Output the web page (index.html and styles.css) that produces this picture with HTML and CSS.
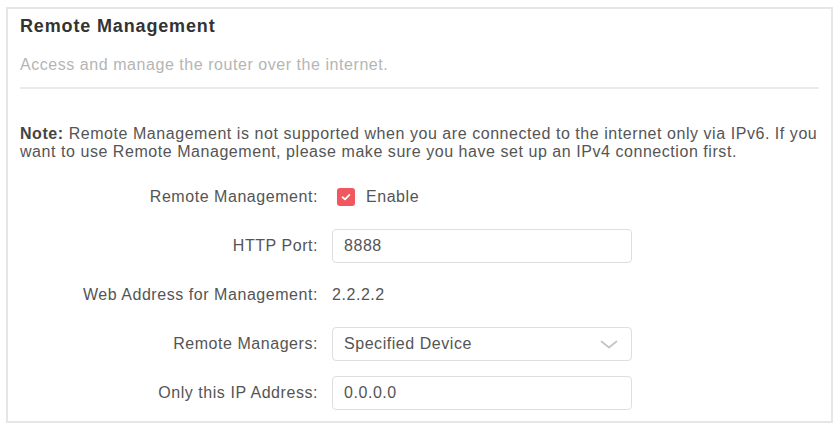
FILE: index.html
```html
<!DOCTYPE html>
<html lang="en">
<head>
    <meta charset="UTF-8">
    <meta name="viewport" content="width=device-width, initial-scale=1.0">
    <title>Remote Management</title>
    <link rel="stylesheet" href="styles.css">
</head>
<body>
    <div class="panel">
        <h2>Remote Management</h2>
        <p class="desc">Access and manage the router over the internet.</p>
        <p class="note"><b>Note:</b> Remote Management is not supported when you are connected to the internet only via IPv6. If you want to use Remote Management, please make sure you have set up an IPv4 connection first.</p>

        <div class="form">
            <div class="row">
                <label>Remote Management:</label>
                <div class="field">
                    <span class="check">
                        <svg width="12" height="12" viewBox="0 0 12 12"><path d="M2.6 6.3 L5 8.4 L9.4 3.9" fill="none" stroke="#fff" stroke-width="1.8" stroke-linecap="round" stroke-linejoin="round"/></svg>
                    </span>
                    <span class="check-label">Enable</span>
                </div>
            </div>
            <div class="row">
                <label>HTTP Port:</label>
                <div class="field"><div class="box">8888</div></div>
            </div>
            <div class="row">
                <label>Web Address for Management:</label>
                <div class="field">2.2.2.2</div>
            </div>
            <div class="row">
                <label>Remote Managers:</label>
                <div class="field">
                    <div class="box select">
                        <span>Specified Device</span>
                        <svg width="18" height="9" viewBox="0 0 18 9"><path d="M1.5 1.5 L9 7.5 L16.5 1.5" fill="none" stroke="#c4c4c4" stroke-width="1.7" stroke-linecap="round" stroke-linejoin="round"/></svg>
                    </div>
                </div>
            </div>
            <div class="row">
                <label>Only this IP Address:</label>
                <div class="field"><div class="box">0.0.0.0</div></div>
            </div>
        </div>
    </div>
</body>
</html>
```

FILE: styles.css
```css
body {
    margin: 0;
    padding: 7px 5px 4px 6px;
    background: #fff;
    font-family: "Liberation Sans", Arial, sans-serif;
    color: #555;
    letter-spacing: 0.55px;
}
.panel {
    border: 2px solid #e6e6e6;
    padding: 0 12px;
    height: 416px;
    box-sizing: border-box;
}
h2 {
    margin: 0;
    padding-top: 5px;
    font-size: 18px;
    line-height: 24px;
    letter-spacing: 0.85px;
    color: #333;
}
.desc {
    margin: 0;
    padding: 17px 0 12px;
    font-size: 16px;
    line-height: 20px;
    color: #b5b5b5;
    border-bottom: 2px solid #eaeaea;
}
.note {
    margin: 36px 0 0;
    font-size: 16px;
    line-height: 18px;
    color: #555;
}
.note b {
    color: #444;
}
.form {
    margin-top: 19px;
    display: flex;
    flex-direction: column;
    gap: 15px;
}
.row {
    display: flex;
    align-items: center;
    height: 34px;
    font-size: 16px;
}
.row label {
    width: 312px;
    flex: none;
    text-align: right;
    padding-right: 14px;
    box-sizing: border-box;
    color: #555;
}
.field {
    display: flex;
    align-items: center;
    color: #555;
}
.check {
    width: 18px;
    height: 18px;
    border-radius: 3px;
    background: #f0575e;
    display: flex;
    align-items: center;
    justify-content: center;
    margin-left: 5px;
}
.check-label {
    margin-left: 11px;
}
.box {
    width: 300px;
    height: 34px;
    box-sizing: border-box;
    border: 1px solid #dedede;
    border-radius: 4px;
    padding: 0 11px;
    display: flex;
    align-items: center;
    color: #555;
}
.select {
    justify-content: space-between;
    padding-right: 13px;
}
```
